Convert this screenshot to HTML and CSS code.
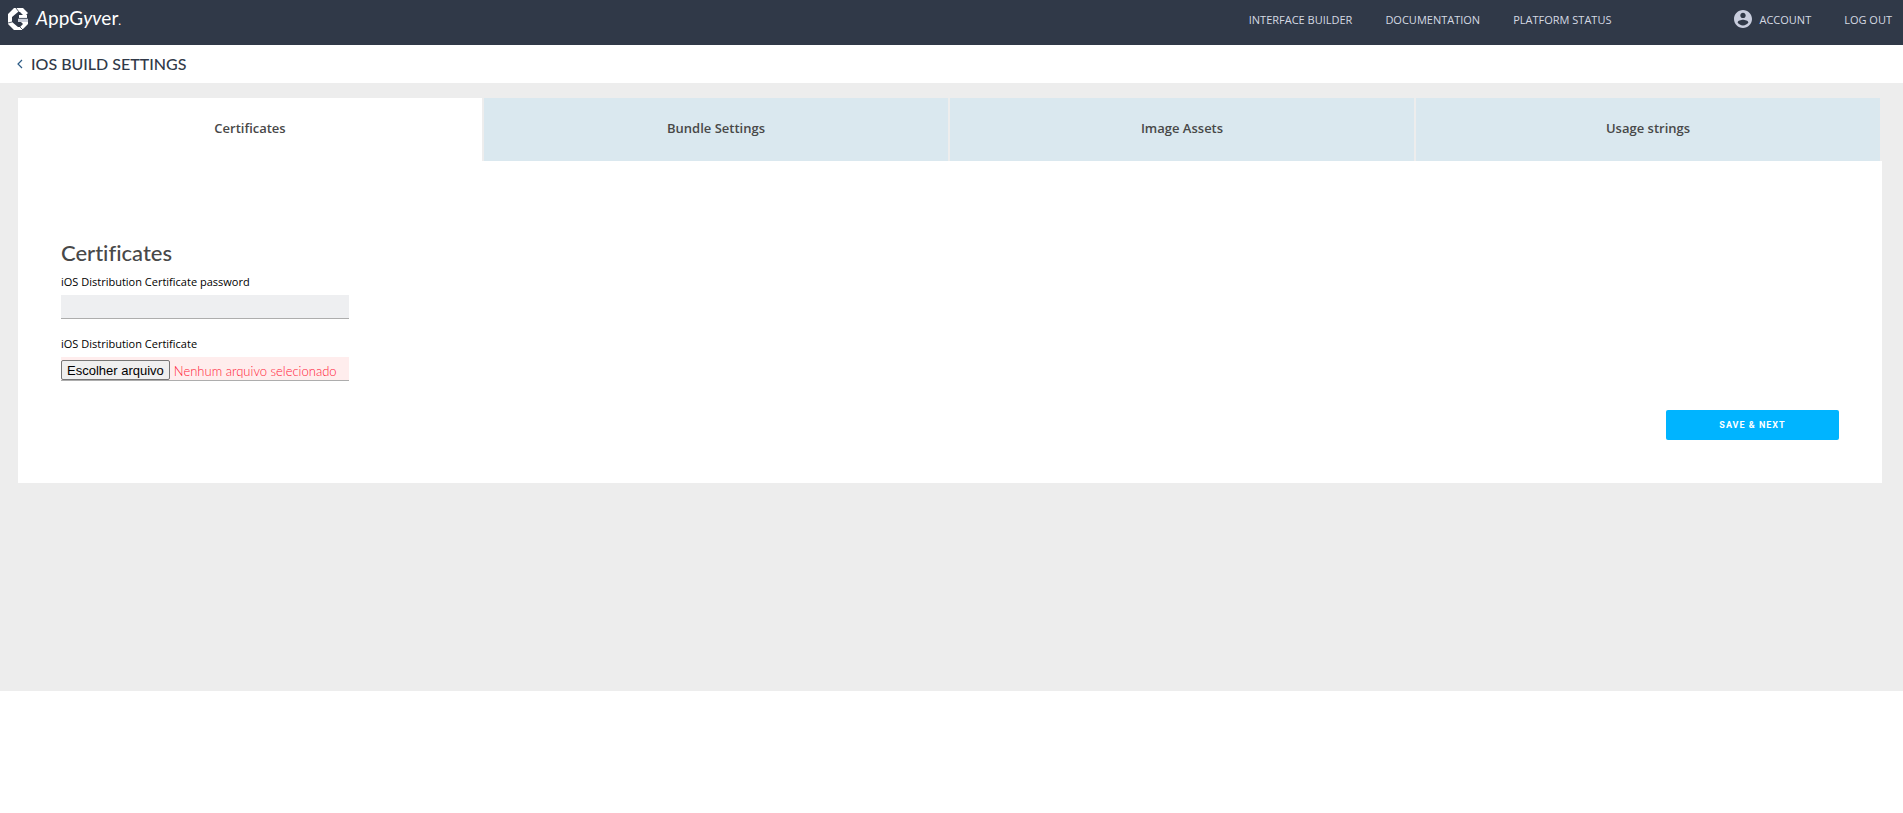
FILE: index.html
```html
<!DOCTYPE html>
<html lang="pt">
<head>
    <meta charset="utf-8">
    <title>iOS Build Settings</title>
    <link rel="stylesheet" href="styles.css">
</head>
<body>
    <header class="topbar">
        <a class="logo" href="#">
            <svg class="logo-mark" viewBox="0 0 21 22" aria-hidden="true">
                <path fill="#fff" d="M6 0h9l5 5-2 2h-3l-3-3h-2L4 9v5l6 5h2l3-3h5l-6 6H6l-6-6V6z"/>
                <path fill="#fff" d="M11 7h8v3h-8zM13 14h7v2h-5z"/>
                <path fill="#c9cdd8" d="M10 10h10v4H10z"/>
                <path fill="none" stroke="#303948" stroke-width=".8" d="M8 0l3 4M0 15l4-1M11 18l4 4M10 10.400h11"/>
            </svg>
            <span class="logo-text"><i>A</i>ppG<i>yv</i>er<small>.</small></span>
        </a>
        <nav class="nav">
            <a href="#">INTERFACE BUILDER</a>
            <a href="#">DOCUMENTATION</a>
            <a href="#">PLATFORM STATUS</a>
            <a class="account" href="#">
                <svg viewBox="2 2 20 20" aria-hidden="true">
                    <path fill="#c8cddd" d="M12 2C6.480 2 2 6.480 2 12s4.480 10 10 10 10-4.480 10-10S17.520 2 12 2zm0 3c1.660 0 3 1.340 3 3s-1.340 3-3 3-3-1.340-3-3 1.340-3 3-3zm0 14.200c-2.500 0-4.710-1.280-6-3.220.030-1.990 4-3.080 6-3.080 1.990 0 5.970 1.090 6 3.080-1.290 1.940-3.500 3.220-6 3.220z"/>
                </svg>
                ACCOUNT
            </a>
            <a href="#">LOG OUT</a>
        </nav>
    </header>

    <div class="title-bar">
        <a class="back" href="#" aria-label="Back">
            <svg viewBox="0 0 6 10" aria-hidden="true">
                <path fill="none" stroke="#2c5b85" stroke-width="1.200" d="M5 1L1 5l4 4"/>
            </svg>
        </a>
        <h1>IOS BUILD SETTINGS</h1>
    </div>

    <main class="content">
        <div class="tabs" role="tablist">
            <button class="tab active" role="tab" aria-selected="true">Certificates</button>
            <button class="tab" role="tab">Bundle Settings</button>
            <button class="tab" role="tab">Image Assets</button>
            <button class="tab" role="tab">Usage strings</button>
        </div>
        <form class="panel">
            <h2>Certificates</h2>
            <label for="password">iOS Distribution Certificate password</label>
            <input class="field" type="password" id="password">
            <label for="certificate">iOS Distribution Certificate</label>
            <div class="field file-field">
                <input type="file" id="certificate">
                <button type="button" id="chooseFile">Escolher arquivo</button>
                <span id="fileName">Nenhum arquivo selecionado</span>
            </div>
            <button type="submit" class="save">SAVE &amp; NEXT</button>
        </form>
    </main>

    <script>
        const certificate = document.getElementById('certificate');
        const fileName = document.getElementById('fileName');

        document.getElementById('chooseFile').addEventListener('click', () => {
            certificate.click();
        });

        certificate.addEventListener('change', () => {
            if (certificate.files.length) {
                fileName.textContent = certificate.files[0].name;
            }
        });
    </script>
</body>
</html>
```
FILE: styles.css
```css
* {
    box-sizing: border-box;
}
body {
    margin: 0;
    background: #fff;
    font-family: Lato, "Liberation Sans", sans-serif;
    font-variant-ligatures: none;
    color: #000;
}
a {
    color: inherit;
    text-decoration: none;
}
.topbar {
    display: flex;
    justify-content: space-between;
    height: 45px;
    padding: 0 11px 7px 8px;
    background: #303948;
}
.logo {
    display: flex;
    align-items: center;
    gap: 7px;
    color: #fff;
}
.logo-mark {
    width: 21px;
    height: 22px;
}
.logo-text {
    font-size: 19px;
    line-height: 20px;
}
.logo-text small {
    font-size: 12px;
}
.nav {
    display: flex;
    align-items: center;
    gap: 33px;
    font: 11px "Open Sans", sans-serif;
    color: #d5d9e3;
}
.account {
    display: flex;
    align-items: center;
    gap: 7px;
    margin-left: 90px;
}
.account svg {
    width: 18px;
    height: 18px;
}
.title-bar {
    display: flex;
    align-items: center;
    gap: 8px;
    height: 38px;
    padding-left: 17px;
}
.back {
    display: flex;
}
.back svg {
    width: 6px;
    height: 10px;
}
h1 {
    margin: 0;
    font-size: 16px;
    line-height: 20px;
    font-weight: 500;
    color: #303948;
}
.content {
    min-height: 608px;
    padding: 15px 21px 0 18px;
    background: #ededed;
}
.tabs {
    display: grid;
    grid-template-columns: repeat(4, 1fr);
    gap: 2px;
    padding-right: 2px;
}
.tab {
    height: 63px;
    padding: 0 0 3px;
    border: 0;
    background: #dae8ef;
    font: 600 13px "Open Sans", sans-serif;
    color: #484848;
}
.tab.active {
    background: #fff;
}
.panel {
    display: flex;
    flex-direction: column;
    align-items: flex-start;
    padding: 78px 43px 43px;
    background: #fff;
}
h2 {
    margin: 0 0 8px;
    font-size: 22px;
    line-height: 28px;
    font-weight: 500;
    color: #484848;
}
label {
    margin-bottom: 6px;
    font: 11px/14px "Open Sans", sans-serif;
}
.field {
    width: 288px;
    height: 24px;
    margin-bottom: 18px;
    border: 0;
    border-bottom: 1px solid #adadad;
    background: #eeeff1;
}
.file-field {
    display: flex;
    align-items: flex-end;
    gap: 4px;
    margin-bottom: 29px;
    background: #ffeded;
    font-size: 13px;
    line-height: 18px;
    font-weight: 300;
    color: #ff2038;
}
.file-field input {
    position: absolute;
    width: 1px;
    height: 1px;
    opacity: 0;
}
.file-field button {
    height: 20px;
    padding: 0 5px;
    border: 1px solid #767676;
    border-radius: 2px;
    background: #efefef;
    font: 13px "Liberation Sans", sans-serif;
    color: #000;
}
.save {
    align-self: flex-end;
    width: 173px;
    height: 30px;
    border: 0;
    border-radius: 2px;
    background: #00b4ff;
    font: bold 9px Roboto, sans-serif;
    letter-spacing: 1px;
    color: #fff;
}
```
